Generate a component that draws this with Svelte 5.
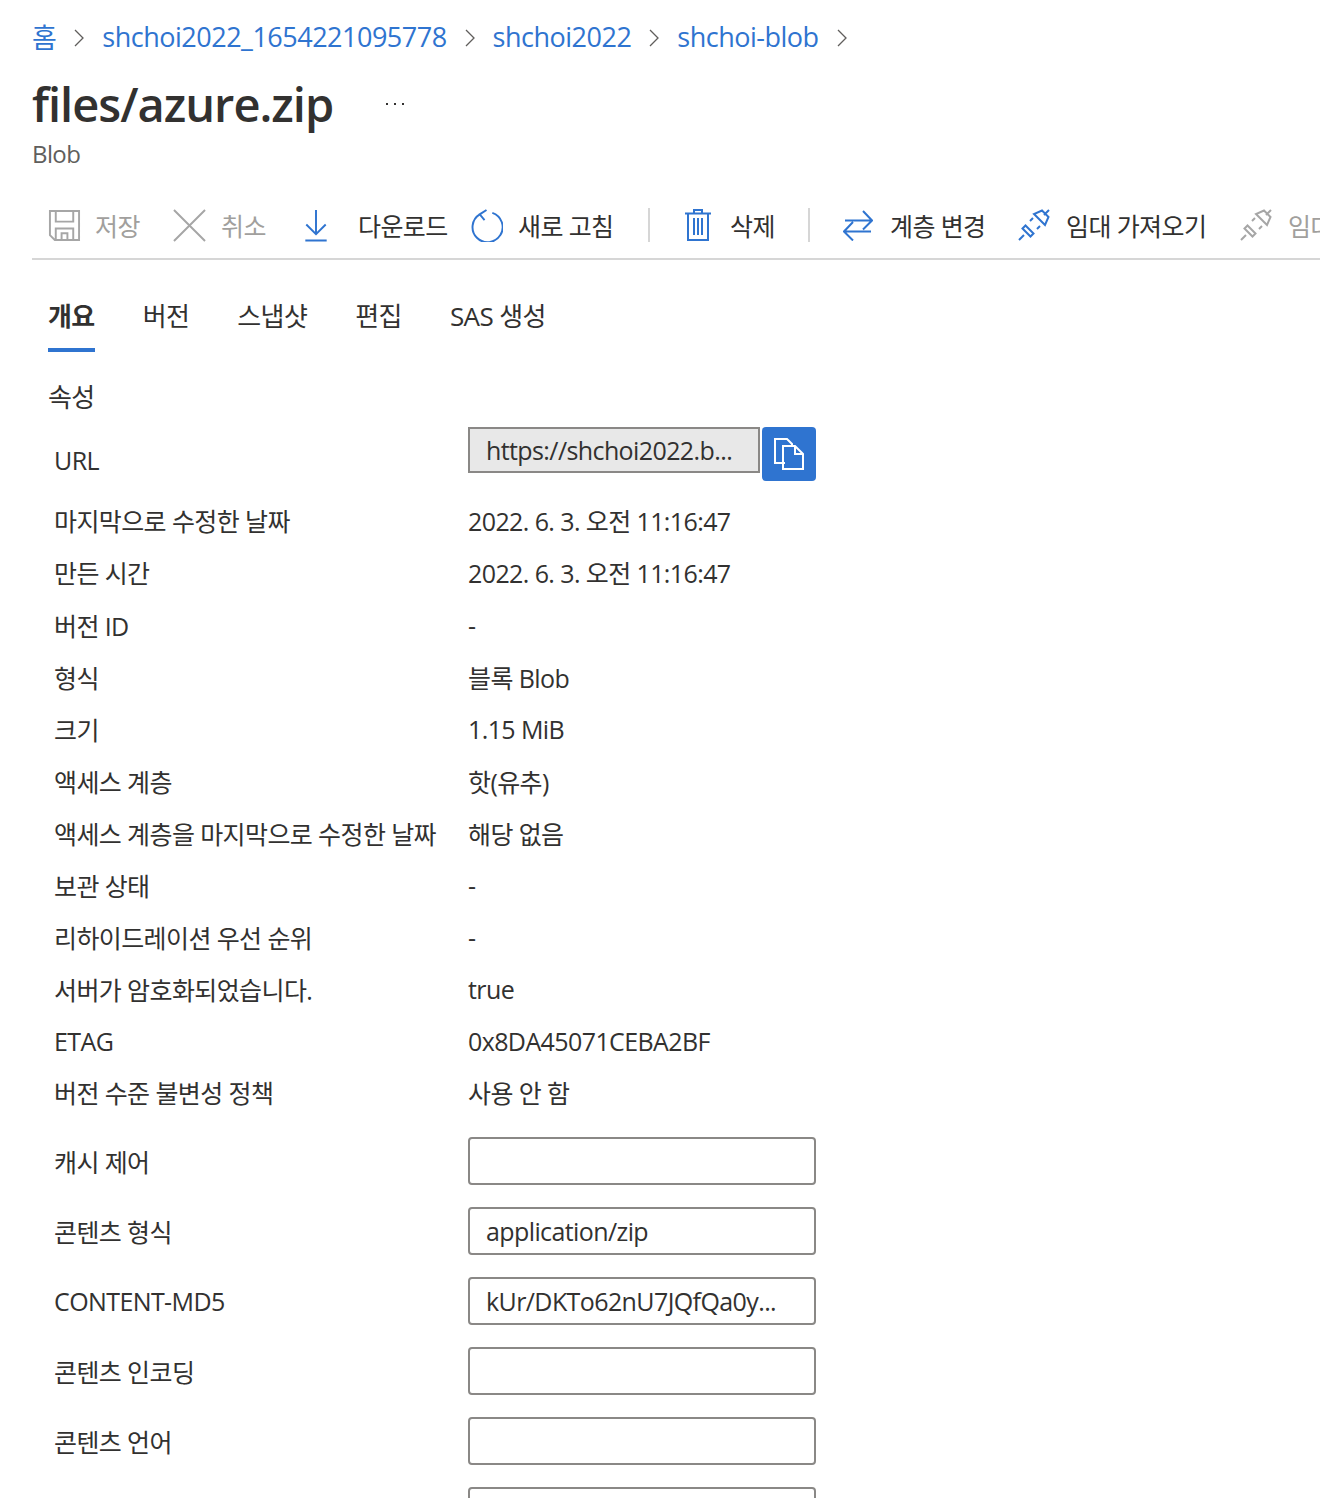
<script>
  const crumbs = ['shchoi2022_1654221095778', 'shchoi2022', 'shchoi-blob']
  const tabs = ['개요', '버전', '스냅샷', '편집', 'SAS 생성']

  const plain = [
    ['마지막으로 수정한 날짜', '2022. 6. 3. 오전 11:16:47', 52],
    ['만든 시간', '2022. 6. 3. 오전 11:16:47', 52],
    ['버전 ID', '-', 53],
    ['형식', '블록 Blob', 52],
    ['크기', '1.15 MiB', 52],
    ['액세스 계층', '핫(유추)', 52],
    ['액세스 계층을 마지막으로 수정한 날짜', '해당 없음', 52],
    ['보관 상태', '-', 52],
    ['리하이드레이션 우선 순위', '-', 52],
    ['서버가 암호화되었습니다.', 'true', 52],
    ['ETAG', '0x8DA45071CEBA2BF', 52],
    ['버전 수준 불변성 정책', '사용 안 함', 50]
  ]

  const fields = [
    ['캐시 제어', ''],
    ['콘텐츠 형식', 'application/zip'],
    ['CONTENT-MD5', 'kUr/DKTo62nU7JQfQa0y...'],
    ['콘텐츠 인코딩', ''],
    ['콘텐츠 언어', ''],
    ['콘텐츠 처리', '']
  ]
</script>

<div class="page">
  <nav class="crumbs">
    <a href="#home">홈</a>
    {#each crumbs as crumb}
      <svg class="chev" viewBox="0 0 10 18"><path d="M1 1l8 8-8 8" /></svg>
      <a href="#{crumb}">{crumb}</a>
    {/each}
    <svg class="chev" viewBox="0 0 10 18"><path d="M1 1l8 8-8 8" /></svg>
  </nav>

  <div class="title-row">
    <h1>files/azure.zip</h1>
    <span class="more">
      <i></i><i></i><i></i>
    </span>
  </div>
  <div class="subtitle">Blob</div>

  <div class="toolbar">
    <button class="tool off save">
      <svg viewBox="0 0 34 34" class="gray">
        <path d="M2 2h30v30H7l-5-5zM8 2v11h18V2M8 32V20h18v12M14 32v-7h6v7" />
      </svg>
      저장
    </button>
    <button class="tool off cancel">
      <svg viewBox="0 0 34 34" class="gray"><path d="M1 1l32 32M33 1L1 33" /></svg>
      취소
    </button>
    <button class="tool download">
      <svg viewBox="0 0 24 34" class="blue"><path d="M12 1v25M2 16l10 10 10-10M1 32.500h22" /></svg>
      다운로드
    </button>
    <button class="tool refresh">
      <svg viewBox="0 0 34 34" class="blue">
        <path d="M10 5.500A15.500 15.500 0 1 0 23 4M17 1l-7 4.500 5 6" />
      </svg>
      새로 고침
    </button>
    <span class="sep first"></span>
    <button class="tool trash">
      <svg viewBox="0 0 26 32" class="blue">
        <path d="M0 4.500h26M3 4.500V31h20V4.500M9 4.500V1h8v3.500M9 9v17M13 9v17M17 9v17" />
      </svg>
      삭제
    </button>
    <span class="sep second"></span>
    <button class="tool tier">
      <svg viewBox="0 0 30 32" class="blue">
        <path d="M2 11.500h27M20 2l9 9.500-9 9M28 22.500H1M10 13l-9 9.500 9 9" />
      </svg>
      계층 변경
    </button>
    <button class="tool lease">
      <svg viewBox="0 0 32 32" class="blue">
        <path d="M1 31l5-5M4.500 19.500l8 8 3-3-8-8zM12 12l3-3M19 20l3-3M16 5l11 11 3.500-8L24 1.500zM26 6l5-5" />
      </svg>
      임대 가져오기
    </button>
    <button class="tool off lease cut">
      <svg viewBox="0 0 32 32" class="gray">
        <path d="M1 31l5-5M4.500 19.500l8 8 3-3-8-8zM12 12l3-3M19 20l3-3M16 5l11 11 3.500-8L24 1.500zM26 6l5-5" />
      </svg>
      임대 중단
    </button>
  </div>

  <div class="tabs">
    {#each tabs as tab, i}
      <span class="tab" class:active={i === 0}>{tab}</span>
    {/each}
  </div>

  <h2>속성</h2>

  <div class="row url-row">
    <div class="label">URL</div>
    <div class="url">
      <input class="box readonly" readonly value="https://shchoi2022.b..." />
      <button class="copy" aria-label="복사">
        <svg viewBox="0 0 30 32">
          <path d="M11 25H1V1h12l5 5v2M9 8h12l8 8v15H9zM21 8v8h8" />
        </svg>
      </button>
    </div>
  </div>

  {#each plain as [label, value, height]}
    <div class="row" style="height: {height}px">
      <div class="label">{label}</div>
      <div class="value">{value}</div>
    </div>
  {/each}

  <div class="form">
    {#each fields as [label, value]}
      <div class="row field">
        <div class="label">{label}</div>
        <input class="box" {value} />
      </div>
    {/each}
  </div>
</div>

<style>
  :global(body) {
    background: #fff;
  }

  .page {
    height: 1498px;
    overflow: hidden;
    padding-left: 32px;
    color: #323130;
    font-family: "Open Sans", "Noto Sans CJK KR", sans-serif;
    font-size: 25px;
    letter-spacing: -0.6px;
  }

  a {
    color: #2f74d0;
    text-decoration: none;
  }

  .crumbs {
    display: flex;
    align-items: center;
    height: 30px;
    padding-top: 21px;
    font-size: 27px;
    letter-spacing: -0.5px;
  }

  .chev {
    width: 10px;
    height: 18px;
    margin: 3px 18px 0;
    flex: none;
  }

  .chev path {
    fill: none;
    stroke: #605e5c;
    stroke-width: 1.300;
  }

  .title-row {
    display: flex;
    align-items: center;
    height: 56px;
    margin-top: 25px;
  }

  h1 {
    margin: 0;
    font-size: 47px;
    font-weight: 600;
    letter-spacing: -1px;
    width: 354px;
  }

  .more {
    display: flex;
    gap: 6px;
  }

  .more i {
    width: 2px;
    height: 2px;
    background: #323130;
  }

  .subtitle {
    margin-top: 5px;
    height: 34px;
    font-size: 24px;
    color: #605e5c;
  }

  .toolbar {
    display: flex;
    align-items: center;
    height: 66px;
    margin-top: 21px;
    border-bottom: 2px solid #d6d6d6;
    white-space: nowrap;
    overflow: hidden;
  }

  .tool {
    display: flex;
    align-items: center;
    flex: none;
    padding: 0;
    border: 0;
    background: none;
    color: #323130;
    font: inherit;
    letter-spacing: inherit;
  }

  .tool.off {
    color: #a19f9d;
  }

  .tool svg {
    flex: none;
    fill: none;
    stroke-width: 2;
  }

  .blue {
    stroke: #2f74d0;
  }

  .gray {
    stroke: #a6a6a6;
  }

  .save {
    margin-left: 16px;
    width: 125px;
  }

  .save svg {
    width: 33px;
    height: 33px;
    margin-right: 14px;
  }

  .cancel {
    width: 131px;
  }

  .cancel svg {
    width: 33px;
    height: 33px;
    margin-right: 15px;
  }

  .download {
    width: 166px;
  }

  .download svg {
    width: 24px;
    height: 33px;
    margin-right: 30px;
  }

  .refresh {
    width: 178px;
  }

  .refresh svg {
    width: 33px;
    height: 33px;
    margin-right: 15px;
  }

  .sep {
    flex: none;
    width: 2px;
    height: 34px;
    background: #d6d6d6;
  }

  .sep.first {
    margin-right: 35px;
  }

  .sep.second {
    margin-right: 33px;
  }

  .trash {
    width: 123px;
  }

  .trash svg {
    width: 26px;
    height: 32px;
    margin-right: 19px;
  }

  .tier {
    width: 175px;
  }

  .tier svg {
    width: 30px;
    height: 32px;
    margin-right: 17px;
  }

  .lease {
    width: 222px;
  }

  .lease svg {
    width: 32px;
    height: 32px;
    margin-right: 16px;
  }

  .tabs {
    display: flex;
    gap: 48px;
    height: 92px;
    padding-left: 16px;
  }

  .tab {
    height: 90px;
    box-sizing: border-box;
    padding-top: 38px;
    font-size: 26px;
    line-height: 36px;
  }

  .tab.active {
    font-weight: 600;
    border-bottom: 4px solid #2f74d0;
    height: 92px;
  }

  h2 {
    margin: 27px 0 0 16px;
    height: 36px;
    font-size: 26px;
    font-weight: 400;
    line-height: 36px;
  }

  .row {
    display: flex;
    align-items: center;
    padding-left: 22px;
  }

  .label {
    width: 414px;
    flex: none;
    white-space: nowrap;
  }

  .url-row {
    height: 68px;
    margin-top: 11px;
    padding-bottom: 8px;
    box-sizing: border-box;
  }

  .url-row .label {
    margin-top: 8px;
  }

  .url {
    display: flex;
    align-items: flex-start;
    gap: 2px;
    margin-bottom: 4px;
  }

  .box {
    width: 348px;
    height: 48px;
    box-sizing: border-box;
    padding: 0 16px;
    border: 2px solid #8a8886;
    border-radius: 4px;
    background: #fff;
    color: #323130;
    font: inherit;
    letter-spacing: inherit;
    outline: none;
  }

  .box.readonly {
    width: 292px;
    height: 46px;
    border-radius: 0;
    background: #e8e8e8;
  }

  .copy {
    width: 54px;
    height: 54px;
    padding: 0;
    border: 0;
    border-radius: 4px;
    background: #2f74d0;
    display: flex;
    align-items: center;
    justify-content: center;
  }

  .copy svg {
    width: 30px;
    height: 32px;
    fill: none;
    stroke: #fff;
    stroke-width: 2;
  }

  .value {
    white-space: nowrap;
  }

  .form {
    margin-top: 9px;
  }

  .field {
    height: 70px;
  }
</style>
